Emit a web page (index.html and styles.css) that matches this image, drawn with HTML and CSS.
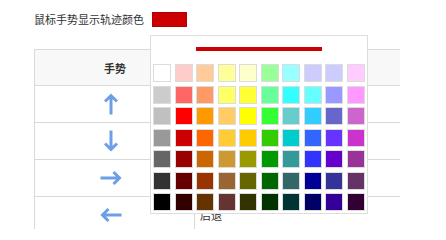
FILE: index.html
```html
<!DOCTYPE html>
<html lang="zh">
<head>
<meta charset="utf-8">
<link rel="stylesheet" href="styles.css">
</head>
<body>
<div class="page">
  <div class="setting">
    <span class="label">鼠标手势显示轨迹颜色</span>
    <span class="current"></span>
  </div>

  <div class="table">
    <div class="row head">
      <div class="cell c1">手势</div>
      <div class="cell c2">操作</div>
    </div>
    <div class="row">
      <div class="cell c1"><svg class="arrow up" viewBox="0 0 14 22" width="14" height="22"><path d="M7 21.5V2.5M1 8.5L7 2.5l6 6"/></svg></div>
      <div class="cell c2">向上滚动</div>
    </div>
    <div class="row">
      <div class="cell c1"><svg class="arrow down" viewBox="0 0 14 22" width="14" height="22"><path d="M7 21.5V2.5M1 8.5L7 2.5l6 6"/></svg></div>
      <div class="cell c2">向下滚动</div>
    </div>
    <div class="row">
      <div class="cell c1"><svg class="arrow right" viewBox="0 0 14 22" width="14" height="22"><path d="M7 21.5V2.5M1 8.5L7 2.5l6 6"/></svg></div>
      <div class="cell c2">前进</div>
    </div>
    <div class="row">
      <div class="cell c1"><svg class="arrow left" viewBox="0 0 14 22" width="14" height="22"><path d="M7 21.5V2.5M1 8.5L7 2.5l6 6"/></svg></div>
      <div class="cell c2">后退</div>
    </div>
  </div>
</div>

<div class="picker">
  <div class="preview"></div>
  <div class="palette">
    <span class="sw" style="background:#ffffff"></span><span class="sw" style="background:#ffcccc"></span><span class="sw" style="background:#ffcc99"></span><span class="sw" style="background:#ffff99"></span><span class="sw" style="background:#ffffcc"></span><span class="sw" style="background:#99ff99"></span><span class="sw" style="background:#99ffff"></span><span class="sw" style="background:#ccccff"></span><span class="sw" style="background:#ccccff"></span><span class="sw" style="background:#ffccff"></span>
    <span class="sw" style="background:#cccccc"></span><span class="sw" style="background:#ff6666"></span><span class="sw" style="background:#ff9966"></span><span class="sw" style="background:#ffff66"></span><span class="sw" style="background:#ffff33"></span><span class="sw" style="background:#66ff99"></span><span class="sw" style="background:#33ffff"></span><span class="sw" style="background:#66ffff"></span><span class="sw" style="background:#9999ff"></span><span class="sw" style="background:#ff99ff"></span>
    <span class="sw" style="background:#c0c0c0"></span><span class="sw" style="background:#ff0000"></span><span class="sw" style="background:#ff9900"></span><span class="sw" style="background:#ffcc66"></span><span class="sw" style="background:#ffff00"></span><span class="sw" style="background:#33ff33"></span><span class="sw" style="background:#66cccc"></span><span class="sw" style="background:#33ccff"></span><span class="sw" style="background:#6666cc"></span><span class="sw" style="background:#cc66cc"></span>
    <span class="sw" style="background:#999999"></span><span class="sw" style="background:#cc0000"></span><span class="sw" style="background:#ff6600"></span><span class="sw" style="background:#ffcc33"></span><span class="sw" style="background:#ffcc00"></span><span class="sw" style="background:#33cc00"></span><span class="sw" style="background:#00cccc"></span><span class="sw" style="background:#3366ff"></span><span class="sw" style="background:#6633ff"></span><span class="sw" style="background:#cc33cc"></span>
    <span class="sw" style="background:#666666"></span><span class="sw" style="background:#990000"></span><span class="sw" style="background:#cc6600"></span><span class="sw" style="background:#cc9933"></span><span class="sw" style="background:#999900"></span><span class="sw" style="background:#009900"></span><span class="sw" style="background:#339999"></span><span class="sw" style="background:#3333ff"></span><span class="sw" style="background:#6600cc"></span><span class="sw" style="background:#993399"></span>
    <span class="sw" style="background:#333333"></span><span class="sw" style="background:#660000"></span><span class="sw" style="background:#993300"></span><span class="sw" style="background:#996633"></span><span class="sw" style="background:#666600"></span><span class="sw" style="background:#006600"></span><span class="sw" style="background:#336666"></span><span class="sw" style="background:#000099"></span><span class="sw" style="background:#333399"></span><span class="sw" style="background:#663366"></span>
    <span class="sw" style="background:#000000"></span><span class="sw" style="background:#330000"></span><span class="sw" style="background:#663300"></span><span class="sw" style="background:#663333"></span><span class="sw" style="background:#333300"></span><span class="sw" style="background:#003300"></span><span class="sw" style="background:#003333"></span><span class="sw" style="background:#000066"></span><span class="sw" style="background:#330099"></span><span class="sw" style="background:#330033"></span>
  </div>
</div>
</body>
</html>
```

FILE: styles.css
```css
html, body {
  margin: 0;
  padding: 0;
  background: #ffffff;
}

body {
  font-family: "Noto Sans CJK SC", "Noto Sans", sans-serif;
  font-size: 11px;
  color: #333333;
  position: relative;
  width: 446px;
  height: 229px;
  overflow: hidden;
}

.page {
  padding: 12px 0 0 34px;
}

.setting {
  display: flex;
  align-items: center;
  height: 15px;
  gap: 8px;
}

.label {
  line-height: 15px;
  white-space: nowrap;
}

.current {
  display: block;
  width: 33px;
  height: 13px;
  background: #cc0000;
  border: 1px solid #b00000;
}

.table {
  margin-top: 22px;
  width: 365px;
  border-top: 1px solid #d9d9d9;
  border-left: 1px solid #d9d9d9;
}

.row {
  display: grid;
  grid-template-columns: 160px 204px;
  height: 36px;
  border-bottom: 1px solid #d9d9d9;
}

.row.head {
  height: 35px;
  background: #f8f8f8;
  font-weight: bold;
}

.cell {
  display: flex;
  align-items: center;
}

.c1 {
  justify-content: center;
  border-right: 1px solid #d9d9d9;
}

.row:not(.head) .c1 {
  padding-right: 7px;
}

.head .c1 {
  padding-left: 1px;
}

.c2 {
  padding-left: 5px;
}

.arrow {
  display: block;
  fill: none;
  stroke: #6d9fe6;
  stroke-width: 3;
}

.arrow.down { transform: rotate(180deg); }
.arrow.right { transform: rotate(90deg); }
.arrow.left { transform: rotate(-90deg); }

.picker {
  position: absolute;
  left: 150px;
  top: 35px;
  width: 218px;
  height: 179px;
  box-sizing: border-box;
  background: #ffffff;
  border: 1px solid #dddddd;
  padding: 11px 2px 0 2px;
}

.preview {
  width: 126px;
  height: 4px;
  margin: 0 auto;
  background: #cc0000;
}

.palette {
  margin-top: 13px;
  display: grid;
  grid-template-columns: repeat(10, 18px);
  grid-auto-rows: 18px;
  gap: 3.56px;
  justify-content: center;
}

.sw {
  display: block;
  box-sizing: border-box;
  border: 1px solid #dcdcdc;
}
```
